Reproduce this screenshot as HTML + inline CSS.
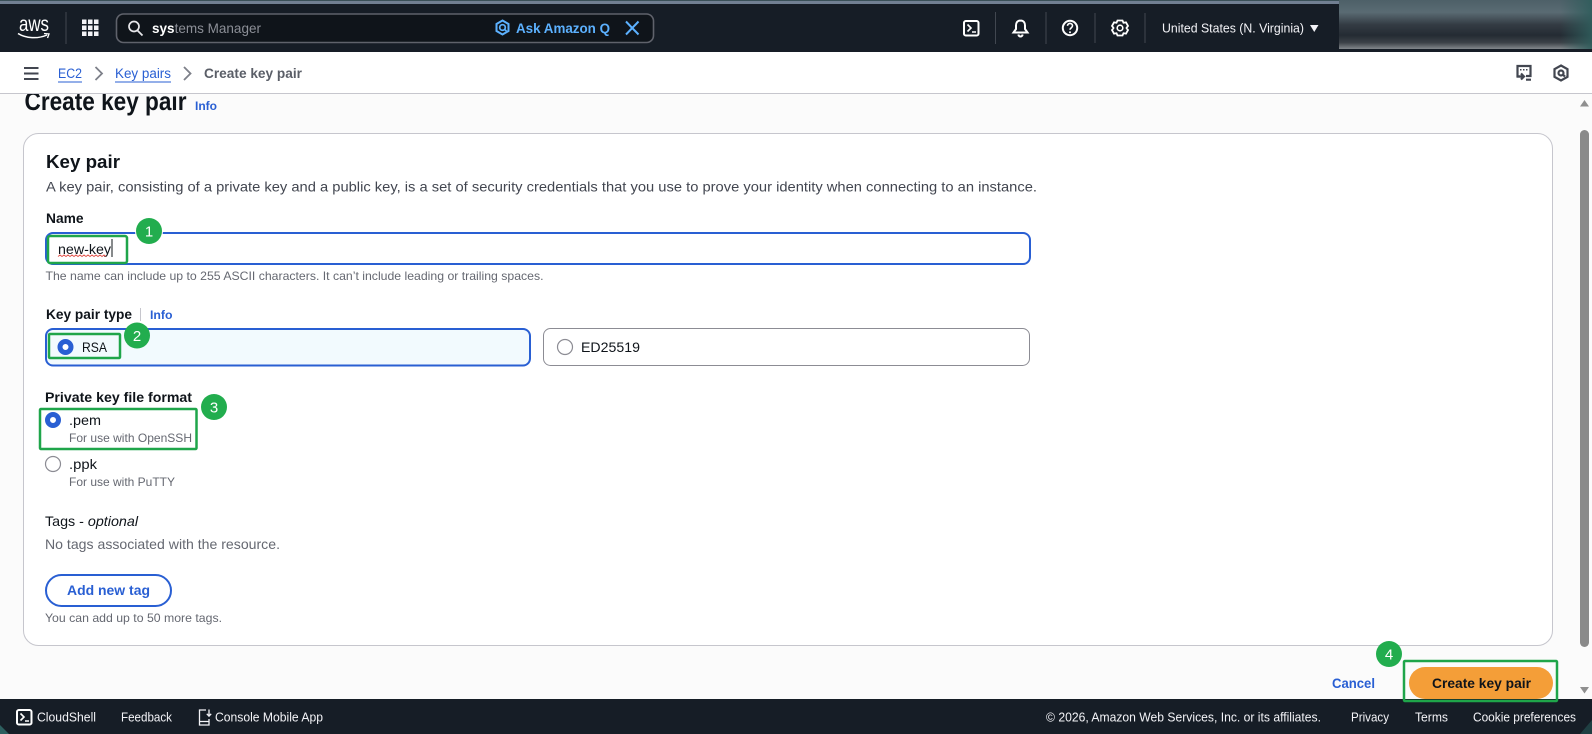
<!DOCTYPE html>
<html><head><meta charset="utf-8"><title>Create key pair</title>
<style>
html,body{margin:0;padding:0;width:1592px;height:734px;overflow:hidden;background:#fbfbfb}
svg{display:block;position:absolute;left:0;top:0}
text{font-family:"Liberation Sans",sans-serif;font-size:14px;fill:#0f141a;white-space:pre}
.b{font-weight:700}
.w{fill:#f3f3f7;font-size:12.5px}
.s{fill:#656871;font-size:12px}
.l{fill:#295fd3}
.i{fill:none;stroke:#fff;stroke-width:2}
.g{fill:none;stroke:#1fa54a;stroke-width:2.5}
.n{fill:#22ad4e}
.nt{fill:#fff;font-size:15px;text-anchor:middle}
</style></head>
<body>
<svg width="1592" height="734" viewBox="0 0 1592 734" xmlns="http://www.w3.org/2000/svg">
<defs>
<linearGradient id="bl" x1="0" y1="0" x2="0" y2="1"><stop offset="0" stop-color="#4d6068"/><stop offset=".25" stop-color="#5a6b73"/><stop offset=".5" stop-color="#343c44"/><stop offset=".72" stop-color="#242b33"/><stop offset=".87" stop-color="#3c4248"/><stop offset="1" stop-color="#83888c"/></linearGradient>
<linearGradient id="bt" x1="0" y1="0" x2="1" y2="0"><stop offset="0" stop-color="#2f5d5c" stop-opacity="0"/><stop offset="1" stop-color="#2f5d5c" stop-opacity=".9"/></linearGradient>
</defs>

<!-- page -->
<rect width="1592" height="734" fill="#fbfbfb"/>
<text x="24.5" y="110" class="b" style="font-size:26px" textLength="162" lengthAdjust="spacingAndGlyphs">Create key pair</text>
<text x="195" y="110" class="b l" style="font-size:12px" textLength="22" lengthAdjust="spacingAndGlyphs">Info</text>

<!-- card -->
<rect x="23.5" y="133.5" width="1529" height="512" rx="15" fill="#fff" stroke="#c6c6cd" stroke-width="1"/>
<text x="46" y="168" class="b" style="font-size:18px" textLength="74" lengthAdjust="spacingAndGlyphs">Key pair</text>
<text x="46" y="191.5" style="fill:#424650" textLength="991" lengthAdjust="spacingAndGlyphs">A key pair, consisting of a private key and a public key, is a set of security credentials that you use to prove your identity when connecting to an instance.</text>

<text x="46" y="223" class="b" style="font-size:13.5px" textLength="37.5" lengthAdjust="spacingAndGlyphs">Name</text>
<rect x="46" y="233" width="984" height="31" rx="7" fill="#fff" stroke="#295fd3" stroke-width="2"/>
<text x="58" y="254" textLength="53" lengthAdjust="spacingAndGlyphs">new-key</text>
<path d="M58 256.5l2-1.500 2 1.500 2-1.500 2 1.500 2-1.500 2 1.500 2-1.500 2 1.500 2-1.500 2 1.500 2-1.500 2 1.500 2-1.500 2 1.500 2-1.500 2 1.500 2-1.500 2 1.500 2-1.500 2 1.500 2-1.500 2 1.500 2-1.500 2 1.500" fill="none" stroke="#e2564f" stroke-width="1"/>
<rect x="111.5" y="239" width="1" height="18" fill="#0f141a"/>
<rect x="48" y="236" width="79" height="27" rx="2" class="g"/>
<text x="45.5" y="280" class="s" textLength="498" lengthAdjust="spacingAndGlyphs">The name can include up to 255 ASCII characters. It can’t include leading or trailing spaces.</text>

<text x="46" y="319" class="b" style="font-size:13.5px" textLength="86" lengthAdjust="spacingAndGlyphs">Key pair type</text>
<rect x="140" y="308" width="1" height="13" fill="#c6c6cd"/>
<text x="150" y="319" class="b l" style="font-size:12px" textLength="22.5" lengthAdjust="spacingAndGlyphs">Info</text>

<rect x="46" y="329" width="484" height="36.5" rx="7" fill="#f2fafe" stroke="#295fd3" stroke-width="2"/>
<rect x="49" y="334" width="71" height="24" rx="1" class="g"/>
<circle cx="65.5" cy="347" r="5.5" fill="#fff" stroke="#295fd3" stroke-width="5"/>
<text x="82" y="352" textLength="25" lengthAdjust="spacingAndGlyphs">RSA</text>
<rect x="543.5" y="328.5" width="486" height="37" rx="7" fill="#fff" stroke="#8c8c94" stroke-width="1"/>
<circle cx="565" cy="347" r="7.5" fill="#fff" stroke="#8c8c94" stroke-width="1.2"/>
<text x="581" y="352" textLength="59" lengthAdjust="spacingAndGlyphs">ED25519</text>

<text x="45" y="402" class="b" style="font-size:13.5px" textLength="147" lengthAdjust="spacingAndGlyphs">Private key file format</text>
<rect x="40" y="409" width="156.5" height="40" rx="1" class="g"/>
<circle cx="53" cy="420" r="5.5" fill="#fff" stroke="#295fd3" stroke-width="5"/>
<text x="69" y="425" textLength="32" lengthAdjust="spacingAndGlyphs">.pem</text>
<text x="69" y="442" class="s" textLength="123" lengthAdjust="spacingAndGlyphs">For use with OpenSSH</text>
<circle cx="53" cy="464" r="7.5" fill="#fff" stroke="#8c8c94" stroke-width="1.2"/>
<text x="69" y="469" textLength="28" lengthAdjust="spacingAndGlyphs">.ppk</text>
<text x="69" y="486" class="s" textLength="106" lengthAdjust="spacingAndGlyphs">For use with PuTTY</text>

<text x="45" y="526" textLength="93" lengthAdjust="spacingAndGlyphs">Tags - <tspan font-style="italic">optional</tspan></text>
<text x="45" y="549" style="fill:#656871" textLength="235" lengthAdjust="spacingAndGlyphs">No tags associated with the resource.</text>
<rect x="46" y="575" width="125" height="31" rx="15.5" fill="#fff" stroke="#295fd3" stroke-width="2"/>
<text x="67" y="595" class="b l" textLength="83" lengthAdjust="spacingAndGlyphs">Add new tag</text>
<text x="45" y="622" class="s" textLength="177" lengthAdjust="spacingAndGlyphs">You can add up to 50 more tags.</text>

<text x="1332" y="688" class="b l" textLength="43" lengthAdjust="spacingAndGlyphs">Cancel</text>
<rect x="1409" y="667" width="144" height="32" rx="16" fill="#f49e38"/>
<text x="1432" y="688" class="b" textLength="99" lengthAdjust="spacingAndGlyphs">Create key pair</text>

<!-- scrollbar -->
<rect x="1580" y="130" width="9" height="517" rx="4.5" fill="#8a8a8a"/>
<path d="M1584.5 100l4.500 6.500h-9z" fill="#8f8f8f"/>
<path d="M1584.5 693.500l-4.500-6.500h9z" fill="#8f8f8f"/>

<!-- breadcrumb bar -->
<rect y="52" width="1592" height="41" fill="#fff"/>
<rect y="93" width="1592" height="1" fill="#c6c6cd"/>
<path d="M24 68h14.5M24 73.5h14.5M24 79h14.5" stroke="#424650" stroke-width="2" fill="none"/>
<text x="58" y="78" class="l" style="font-size:13.5px" textLength="24" lengthAdjust="spacingAndGlyphs">EC2</text>
<rect x="58" y="81.5" width="24" height="1" fill="#295fd3"/>
<path d="M95.5 67l6.500 6.500-6.500 6.500" fill="none" stroke="#7d8089" stroke-width="1.8"/>
<text x="115" y="78" class="l" style="font-size:13.5px" textLength="56" lengthAdjust="spacingAndGlyphs">Key pairs</text>
<rect x="115" y="81.5" width="56" height="1" fill="#295fd3"/>
<path d="M184 67l6.500 6.500-6.500 6.500" fill="none" stroke="#7d8089" stroke-width="1.8"/>
<text x="204" y="78" class="b" style="font-size:13.5px;fill:#5a5e67" textLength="98" lengthAdjust="spacingAndGlyphs">Create key pair</text>
<g fill="none" stroke="#424650" stroke-width="2.2">
<path d="M1522 76.5h-4.500V66h13v10H1526"/>
<path d="M1521 79.500l3-3-3-3M1517 76.500h6M1526 79.700h5"/>
<path d="M1561 65.5l6.500 3.700v7.600l-6.500 3.700-6.500-3.700v-7.600z"/>
<circle cx="1561" cy="73" r="2.5"/><path d="M1562.5 74.5l2.500 2"/>
</g>
<path d="M1520 69h1.500v1.500H1520zM1523 69h1.500v1.500H1523zM1526 69h1.500v1.500H1526z" fill="#424650"/>

<!-- top nav -->
<rect width="1592" height="52" fill="#161d26"/>
<rect width="1339" height="1" fill="#3a5058"/>
<rect y="1" width="1339" height="3" fill="#717f92"/>
<rect x="1339" y="0" width="253" height="49" fill="url(#bl)"/>
<rect x="1560" y="0" width="32" height="49" fill="url(#bt)"/>

<text x="19" y="31" style="fill:#fff;font-size:21px" textLength="30" lengthAdjust="spacingAndGlyphs">aws</text>
<path d="M18 33.5c8 5 20 5.500 29 1.500" fill="none" stroke="#fff" stroke-width="1.5"/>
<path d="M44 33.5l5 .5-1.500 4" fill="none" stroke="#fff" stroke-width="1.3"/>
<rect x="65.5" y="12" width="1" height="32" fill="#414750"/>
<g fill="#f3f3f7"><rect x="82" y="19.5" width="4.5" height="4.5"/><rect x="88" y="19.5" width="4.5" height="4.5"/><rect x="94" y="19.5" width="4.5" height="4.5"/><rect x="82" y="25.5" width="4.5" height="4.5"/><rect x="88" y="25.5" width="4.5" height="4.5"/><rect x="94" y="25.5" width="4.5" height="4.5"/><rect x="82" y="31.5" width="4.5" height="4.5"/><rect x="88" y="31.5" width="4.5" height="4.5"/><rect x="94" y="31.5" width="4.5" height="4.5"/></g>
<rect x="116.5" y="14" width="537" height="28.5" rx="7" fill="#0f141a" stroke="#5f626b" stroke-width="1.6"/>
<circle cx="134" cy="26.5" r="5" fill="none" stroke="#e6e6ea" stroke-width="1.7"/>
<path d="M137.5 30.5l5 5" stroke="#e6e6ea" stroke-width="1.8"/>
<text x="152" y="33" style="fill:#8c8f97" textLength="109" lengthAdjust="spacingAndGlyphs"><tspan class="b" style="fill:#fff">sys</tspan>tems Manager</text>
<path d="M502.5 20.5l6 3.500v7l-6 3.500-6-3.500v-7z" fill="none" stroke="#5cb1ff" stroke-width="2"/>
<circle cx="502.5" cy="27.5" r="2.8" fill="none" stroke="#5cb1ff" stroke-width="1.7"/>
<path d="M504 29l2.500 2" stroke="#5cb1ff" stroke-width="1.7"/>
<text x="516" y="33" class="b" style="fill:#5cb1ff" textLength="94" lengthAdjust="spacingAndGlyphs">Ask Amazon Q</text>
<path d="M626 21.5l12.500 13M638.5 21.500l-12.500 13" stroke="#5cb1ff" stroke-width="2" fill="none"/>

<rect x="995" y="12" width="1" height="32" fill="#414750"/>
<rect x="1045.5" y="12" width="1" height="32" fill="#414750"/>
<rect x="1094.5" y="13" width="1" height="30" fill="#414750"/>
<rect x="1144.5" y="13" width="1" height="30" fill="#414750"/>
<rect x="964" y="21" width="14.5" height="14.5" rx="1.8" class="i"/>
<path d="M967.5 24.5l3.500 3.500-3.500 3.500M972 32h4" class="i" style="stroke-width:1.6"/>
<path d="M1020.5 20.5c-3.200 0-4.500 2.400-4.500 5v3.500l-2.500 3.500h14l-2.500-3.500v-3.500c0-2.600-1.300-5-4.500-5zM1018.3 34.500c.4 1.500 1.200 2 2.200 2s1.800-.5 2.200-2" class="i"/>
<circle cx="1070" cy="28" r="7.2" class="i"/>
<path d="M1067.5 25.800c.3-3.300 5-3 5 0 0 2-2.500 2.200-2.500 4" class="i" style="stroke-width:1.6"/>
<circle cx="1070" cy="32.3" r="1" fill="#fff"/>
<path d="M1117.5 20.5h5l1 2.300 2.500-.4 2 3.500-1.500 2.100 1.500 2.100-2 3.500-2.500-.4-1 2.300h-5l-1-2.300-2.500.4-2-3.500 1.500-2.100-1.500-2.100 2-3.500 2.500.4z" class="i" style="stroke-width:1.8"/>
<circle cx="1120" cy="28" r="2.8" class="i" style="stroke-width:1.6"/>
<text x="1162" y="32.5" style="fill:#f3f3f7;font-size:13px" textLength="142" lengthAdjust="spacingAndGlyphs">United States (N. Virginia)</text>
<path d="M1310 25h8.500l-4.250 7z" fill="#f3f3f7"/>

<!-- footer -->
<rect y="699" width="1592" height="35" fill="#161d26"/>
<path d="M0 725l9 9H0z" fill="#2d5f5f"/>
<path d="M1580 734l12-14v14z" fill="#1f3f42"/>
<rect x="17" y="710" width="14.5" height="14.5" rx="1.8" class="i"/>
<path d="M20.5 713.5l3.500 3.500-3.500 3.500M25 721h4" class="i" style="stroke-width:1.6"/>
<text x="37" y="721.5" class="w" textLength="59" lengthAdjust="spacingAndGlyphs">CloudShell</text>
<text x="121" y="721.5" class="w" textLength="51" lengthAdjust="spacingAndGlyphs">Feedback</text>
<path d="M206 710h-6.500v15h9.500v-6M199.500 721.500h9.500M209 709.500v6.500M206.800 713.800l2.200 2.400 2.200-2.400" fill="none" stroke="#f3f3f7" stroke-width="1.3"/>
<text x="215" y="721.5" class="w" textLength="108" lengthAdjust="spacingAndGlyphs">Console Mobile App</text>
<text x="1046" y="721.5" class="w" textLength="275" lengthAdjust="spacingAndGlyphs">© 2026, Amazon Web Services, Inc. or its affiliates.</text>
<text x="1351" y="721.5" class="w" textLength="38" lengthAdjust="spacingAndGlyphs">Privacy</text>
<text x="1415" y="721.5" class="w" textLength="33" lengthAdjust="spacingAndGlyphs">Terms</text>
<text x="1473" y="721.5" class="w" textLength="103" lengthAdjust="spacingAndGlyphs">Cookie preferences</text>

<!-- annotations -->
<rect x="1404" y="661" width="153" height="40" rx="1" class="g"/>
<circle cx="149" cy="231" r="14" fill="#fff"/>
<circle cx="149" cy="231" r="13" class="n"/><text x="149" y="236.5" class="nt">1</text>
<circle cx="137" cy="335.5" r="13" class="n"/><text x="137" y="341" class="nt">2</text>
<circle cx="214" cy="407" r="13" class="n"/><text x="214" y="412.5" class="nt">3</text>
<circle cx="1389" cy="654" r="13" class="n"/><text x="1389" y="659.5" class="nt">4</text>
</svg>
</body></html>
